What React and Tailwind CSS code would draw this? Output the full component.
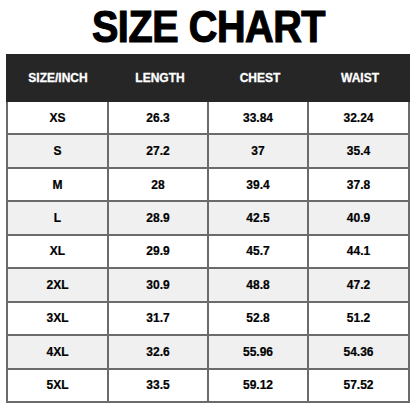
import React from 'react'

const rows = [
  ['XS', '26.3', '33.84', '32.24'],
  ['S', '27.2', '37', '35.4'],
  ['M', '28', '39.4', '37.8'],
  ['L', '28.9', '42.5', '40.9'],
  ['XL', '29.9', '45.7', '44.1'],
  ['2XL', '30.9', '48.8', '47.2'],
  ['3XL', '31.7', '52.8', '51.2'],
  ['4XL', '32.6', '55.96', '54.36'],
  ['5XL', '33.5', '59.12', '57.52'],
]

const headers = ['SIZE/INCH', 'LENGTH', 'CHEST', 'WAIST']

export default function App() {
  return (
    <div className="w-[416px] h-[416px] bg-white overflow-hidden font-['Liberation_Sans',Arial,sans-serif]">
      <div className="h-[54px] flex items-center justify-center">
        <h1 className="text-[45px] leading-none font-bold text-black tracking-[-0.5px] scale-x-[0.88] [-webkit-text-stroke:1.2px_black] mt-[-1px]">
          SIZE CHART
        </h1>
      </div>
      <div className="ml-[6px] w-[404px]">
        <div className="h-[48px] bg-[#262626] grid grid-cols-[104px_100px_100px_100px] items-center">
          {headers.map(h => (
            <div key={h} className="text-center text-white text-[12px] font-bold [-webkit-text-stroke:0.3px_white]">{h}</div>
          ))}
        </div>
        <div className="h-[301px] flex flex-col border-x-2 border-[#6b6b6b]">
          {rows.map((r, i) => (
            <div key={r[0]} className={`flex-1 grid grid-cols-[101px_100px_100px_1fr] border-b-2 border-[#6b6b6b] ${i % 2 === 1 ? 'bg-[#f0f0f0]' : 'bg-white'}`}>
              {r.map((c, j) => (
                <div key={j} className={`flex items-center justify-center text-[12px] font-bold text-black [-webkit-text-stroke:0.2px_black] ${j < 3 ? 'border-r-2 border-[#6b6b6b]' : ''}`}>{c}</div>
              ))}
            </div>
          ))}
        </div>
      </div>
    </div>
  )
}
